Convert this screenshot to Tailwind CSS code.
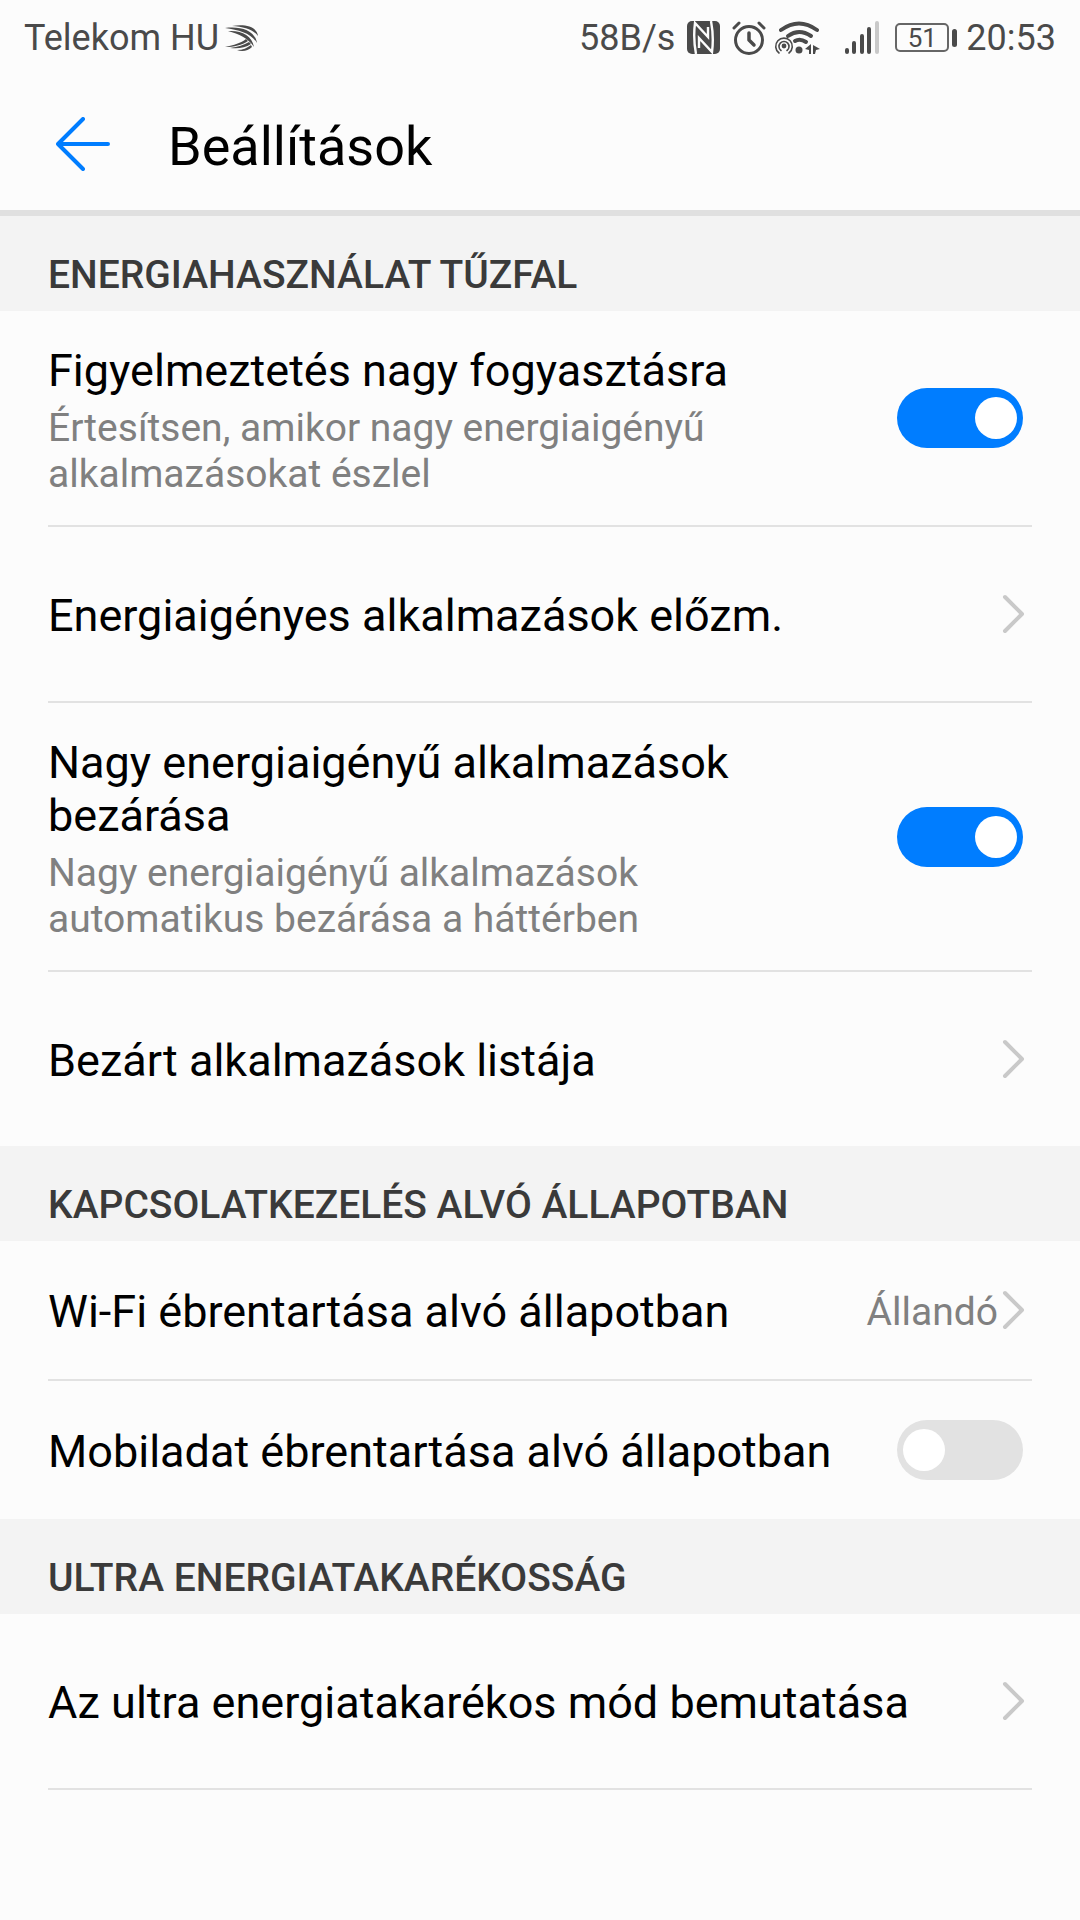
<!DOCTYPE html>
<html lang="hu">
<head>
  <meta charset="UTF-8">
  <meta name="viewport" content="width=device-width, initial-scale=1.0">
  <title>Beállítások</title>
  <script src="https://cdn.jsdelivr.net/npm/@tailwindcss/browser@4"></script>
</head>
<body class="bg-[#fcfcfc] min-h-screen font-['Roboto',sans-serif] text-black">

  <!-- Status bar -->
  <div class="flex h-[75px] items-center justify-between px-6 text-[36px] leading-[42px] text-[#4a4a4a]">
    <div class="flex items-center gap-1.5">
      <span>Telekom HU</span>
      <svg class="w-[34px] h-[26px]" viewBox="0 0 34 26" fill="currentColor">
        <path d="M7 1C19-1 32 1 33 11C28 4 19 2 7 1Z"/>
        <path d="M0 3C15 1 30 5 32 18C26 8 14 5 0 3Z"/>
        <path d="M3 6C16 5 27 10 29 22C23 13 14 9 3 6Z"/>
        <path d="M0 22C9 20 16 18 21 14L23 16C17 20 9 22 0 22Z"/>
        <path d="M5 23C13 22 19 20 24 17L26 19C20 23 13 24 5 23Z"/>
        <path d="M12 25C18 25 22 23 26 20L27 22C23 26 17 27 12 25Z"/>
      </svg>
    </div>
    <div class="flex items-center">
      <span>58B/s</span>
      <svg class="ml-3 w-[34px] h-[34px]" viewBox="0 0 34 34">
        <rect x="0" y="0" width="33" height="33" rx="5" fill="#4a4a4a"/>
        <path d="M9 33Q6 17 8 2L21 16V6M24 0Q27 16 25 31L12 17V27" fill="none" stroke="#fcfcfc" stroke-width="2.400"/>
      </svg>
      <svg class="ml-[11px] w-[34px] h-[34px]" viewBox="0 0 34 34" fill="none" stroke="#4a4a4a" stroke-width="3" stroke-linecap="round" stroke-linejoin="round">
        <circle cx="17" cy="19" r="13.500"/>
        <path d="M17 12v7l5 5" stroke-width="3.500"/>
        <path d="M2 7l5-5M32 7l-5-5"/>
      </svg>
      <svg class="ml-2 w-[46px] h-[34px]" viewBox="0 0 46 34" fill="none" stroke="#4a4a4a" stroke-linecap="round">
        <path d="M7 9Q25-4 43 9" stroke-width="4"/>
        <path d="M14 15Q25 7 37 15" stroke-width="4"/>
        <path d="M21 20Q26 17 32 21" stroke-width="4"/>
        <circle cx="25" cy="29" r="3.500" fill="#4a4a4a" stroke="none"/>
        <circle cx="10" cy="25" r="2.400" fill="#4a4a4a" stroke="none"/>
        <path d="M7 29.500a5 5 0 1 1 6 0M5 32a8.300 8.300 0 1 1 10 0" stroke-width="1.600"/>
        <path d="M31 28l6-5v10h-2v-4zM39 33V24l7 4-4 1-1 4z" fill="#4a4a4a" stroke="none"/>
      </svg>
      <svg class="ml-6 w-9 h-[34px]" viewBox="0 0 36 34" stroke="#4a4a4a" stroke-width="4" stroke-linecap="round">
        <path d="M3 29v2M10 22v9M18 15v16M25 8v23"/>
        <path d="M33 2v29" stroke="#c9c9c9"/>
      </svg>
      <div class="ml-[15px] flex items-center gap-[3px]">
        <span class="flex h-[29px] w-[54px] items-center justify-center rounded-[5px] border-2 border-[#666] text-[26px]">51</span>
        <span class="h-[18px] w-[5px] rounded-full bg-[#4a4a4a]"></span>
      </div>
      <span class="ml-[9px]">20:53</span>
    </div>
  </div>

  <header class="flex h-[141px] items-center border-b-[6px] border-[#e0e0e0] pt-0.5 pl-14">
    <a href="#" aria-label="Vissza">
      <svg class="w-[54px] h-[54px]" viewBox="0 0 54 54" fill="none" stroke="#007dff" stroke-width="4" stroke-linecap="round" stroke-linejoin="round">
        <path d="M27 2L2 27l25 25M2 27h50"/>
      </svg>
    </a>
    <h1 class="ml-[58px] pt-1.5 text-[54px] leading-[64px]">Beállítások</h1>
  </header>

  <main>
    <section>
      <h2 class="bg-[#f3f3f3] px-12 pt-9 pb-[13px] text-[39px] leading-[46px] font-medium text-[#3a3a3a]">ENERGIAHASZNÁLAT TŰZFAL</h2>
      <div class="px-12">
        <label class="flex items-center justify-between border-b-2 border-[#e2e2e2] pr-[9px]">
          <span class="block max-w-[700px] pt-[33px] pb-7">
            <span class="block text-[45px] leading-[53px]">Figyelmeztetés nagy fogyasztásra</span>
            <span class="mt-2 block text-[39px] leading-[46px] text-[#808080]">Értesítsen, amikor nagy energiaigényű alkalmazásokat észlel</span>
          </span>
          <input type="checkbox" role="switch" checked class="h-[60px] w-[126px] shrink-0 appearance-none rounded-full bg-[#e2e2e2] px-1.5 py-[9px] before:block before:size-[42px] before:rounded-full before:bg-white checked:bg-[#007dff] checked:before:ml-auto">
        </label>
        <a href="#" class="flex h-44 items-center justify-between border-b-2 border-[#e2e2e2] pr-1.5">
          <span class="pt-0.5 text-[45px] leading-[53px]">Energiaigényes alkalmazások előzm.</span>
          <svg class="w-6 h-10" viewBox="0 0 24 40" fill="none" stroke="#c9c9c9" stroke-width="4" stroke-linecap="round" stroke-linejoin="round"><path d="M3 3l17 17L3 37"/></svg>
        </a>
        <label class="flex items-center justify-between border-b-2 border-[#e2e2e2] pr-[9px]">
          <span class="block max-w-[700px] pt-[33px] pb-7">
            <span class="block text-[45px] leading-[53px]">Nagy energiaigényű alkalmazások bezárása</span>
            <span class="mt-2 block text-[39px] leading-[46px] text-[#808080]">Nagy energiaigényű alkalmazások automatikus bezárása a háttérben</span>
          </span>
          <input type="checkbox" role="switch" checked class="h-[60px] w-[126px] shrink-0 appearance-none rounded-full bg-[#e2e2e2] px-1.5 py-[9px] before:block before:size-[42px] before:rounded-full before:bg-white checked:bg-[#007dff] checked:before:ml-auto">
        </label>
        <a href="#" class="flex h-[174px] items-center justify-between pr-1.5">
          <span class="pt-0.5 text-[45px] leading-[53px]">Bezárt alkalmazások listája</span>
          <svg class="w-6 h-10" viewBox="0 0 24 40" fill="none" stroke="#c9c9c9" stroke-width="4" stroke-linecap="round" stroke-linejoin="round"><path d="M3 3l17 17L3 37"/></svg>
        </a>
      </div>
    </section>

    <section>
      <h2 class="bg-[#f3f3f3] px-12 pt-9 pb-[13px] text-[39px] leading-[46px] font-medium text-[#3a3a3a]">KAPCSOLATKEZELÉS ALVÓ ÁLLAPOTBAN</h2>
      <div class="px-12">
        <a href="#" class="flex h-[140px] items-center justify-between border-b-2 border-[#e2e2e2] pr-1.5">
          <span class="pt-0.5 text-[45px] leading-[53px]">Wi-Fi ébrentartása alvó állapotban</span>
          <span class="flex items-center gap-1">
            <span class="pt-1 text-[39px] leading-[46px] text-[#808080]">Állandó</span>
            <svg class="w-6 h-10" viewBox="0 0 24 40" fill="none" stroke="#c9c9c9" stroke-width="4" stroke-linecap="round" stroke-linejoin="round"><path d="M3 3l17 17L3 37"/></svg>
          </span>
        </a>
        <label class="flex h-[138px] items-center justify-between pr-[9px]">
          <span class="pt-0.5 text-[45px] leading-[53px]">Mobiladat ébrentartása alvó állapotban</span>
          <input type="checkbox" role="switch" class="h-[60px] w-[126px] shrink-0 appearance-none rounded-full bg-[#e2e2e2] px-1.5 py-[9px] before:block before:size-[42px] before:rounded-full before:bg-white checked:bg-[#007dff] checked:before:ml-auto">
        </label>
      </div>
    </section>

    <section>
      <h2 class="bg-[#f3f3f3] px-12 pt-9 pb-[13px] text-[39px] leading-[46px] font-medium text-[#3a3a3a]">ULTRA ENERGIATAKARÉKOSSÁG</h2>
      <div class="px-12">
        <a href="#" class="flex h-44 items-center justify-between border-b-2 border-[#e2e2e2] pr-1.5">
          <span class="pt-0.5 text-[45px] leading-[53px]">Az ultra energiatakarékos mód bemutatása</span>
          <svg class="w-6 h-10" viewBox="0 0 24 40" fill="none" stroke="#c9c9c9" stroke-width="4" stroke-linecap="round" stroke-linejoin="round"><path d="M3 3l17 17L3 37"/></svg>
        </a>
      </div>
    </section>
  </main>

</body>
</html>
